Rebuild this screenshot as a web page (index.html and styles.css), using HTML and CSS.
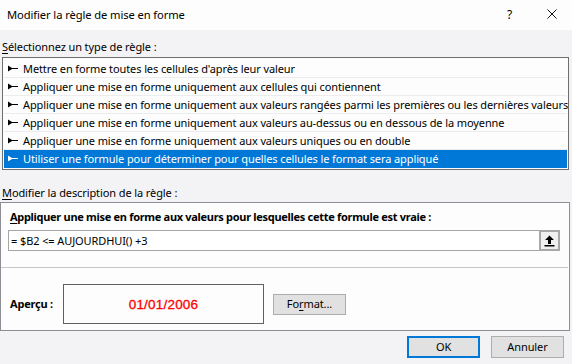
FILE: index.html
```html
<!DOCTYPE html>
<html lang="fr">
<head>
<meta charset="utf-8">
<link rel="stylesheet" href="styles.css">
</head>
<body>
<div class="dialog">
  <div class="titlebar">
    <span class="title">Modifier la règle de mise en forme</span>
    <span class="help">?</span>
    <svg class="close" width="10" height="10" viewBox="0 0 10 10"><path d="M0.5 0.5 L9.5 9.5 M9.5 0.5 L0.5 9.5" stroke="#111" stroke-width="1" fill="none"/></svg>
  </div>
  <div class="section-label"><u>S</u>électionnez un type de règle :</div>
  <ul class="rules">
    <li class="rule"><svg class="mark" width="11" height="7" viewBox="0 0 11 7"><path d="M0 0.5 L4 3 L10 3 L10 4 L4 4 L0 6.5 Z"/></svg>Mettre en forme toutes les cellules d'après leur valeur</li>
    <li class="rule"><svg class="mark" width="11" height="7" viewBox="0 0 11 7"><path d="M0 0.5 L4 3 L10 3 L10 4 L4 4 L0 6.5 Z"/></svg>Appliquer une mise en forme uniquement aux cellules qui contiennent</li>
    <li class="rule"><svg class="mark" width="11" height="7" viewBox="0 0 11 7"><path d="M0 0.5 L4 3 L10 3 L10 4 L4 4 L0 6.5 Z"/></svg>Appliquer une mise en forme uniquement aux valeurs rangées parmi les premières ou les dernières valeurs</li>
    <li class="rule"><svg class="mark" width="11" height="7" viewBox="0 0 11 7"><path d="M0 0.5 L4 3 L10 3 L10 4 L4 4 L0 6.5 Z"/></svg>Appliquer une mise en forme uniquement aux valeurs au-dessus ou en dessous de la moyenne</li>
    <li class="rule"><svg class="mark" width="11" height="7" viewBox="0 0 11 7"><path d="M0 0.5 L4 3 L10 3 L10 4 L4 4 L0 6.5 Z"/></svg>Appliquer une mise en forme uniquement aux valeurs uniques ou en double</li>
    <li class="rule selected"><svg class="mark" width="11" height="7" viewBox="0 0 11 7"><path d="M0 0.5 L4 3 L10 3 L10 4 L4 4 L0 6.5 Z"/></svg>Utiliser une formule pour déterminer pour quelles cellules le format sera appliqué</li>
  </ul>
  <div class="section-label desc-label"><u>M</u>odifier la description de la règle :</div>
  <div class="group">
    <div class="formula-label"><u>A</u>ppliquer une mise en forme aux valeurs pour lesquelles cette formule est vraie :</div>
    <div class="formula">
      <span class="formula-text">= $B2 &lt;= AUJOURDHUI() +3</span>
      <span class="collapse-btn"><svg width="11" height="12" viewBox="0 0 11 12"><path d="M5.5 0.5 L10 5 L7 5 L7 9 L4 9 L4 5 L1 5 Z" fill="#000"/><rect x="0.5" y="10" width="10" height="1.5" fill="#000"/></svg></span>
    </div>
    <div class="separator"></div>
    <div class="preview-row">
      <span class="preview-label">Aperçu :</span>
      <div class="preview-box">01/01/2006</div>
      <button class="btn format-btn">Fo<u>r</u>mat...</button>
    </div>
  </div>
  <div class="actions">
    <button class="btn action-btn default">OK</button>
    <button class="btn action-btn">Annuler</button>
  </div>
</div>
</body>
</html>
```

FILE: styles.css
```css
html, body {
  margin: 0;
  padding: 0;
}
body {
  width: 572px;
  height: 364px;
  background: #f3f2f5;
  font-family: "Noto Sans", "Open Sans", sans-serif;
  font-size: 11px;
  letter-spacing: -0.1px;
  color: #000;
  overflow: hidden;
}
.dialog {
  display: flex;
  flex-direction: column;
  width: 572px;
  height: 364px;
}
.titlebar {
  height: 30px;
  background: #fcfdfc;
  display: flex;
  align-items: center;
  padding-left: 7px;
  box-sizing: border-box;
}
.title {
  flex: 1;
  font-size: 11.2px;
  line-height: 16px;
}
.help {
  width: 10px;
  margin-right: 30px;
  font-size: 12px;
  line-height: 16px;
}
.close {
  margin-right: 15px;
  margin-bottom: 2px;
}
.section-label {
  margin-top: 9px;
  margin-left: 2px;
  line-height: 16px;
}
u {
  text-decoration-thickness: 1px;
  text-underline-offset: 2px;
}
.rules {
  list-style: none;
  margin: 2px 3px 0 2px;
  padding: 2px 1px 1px 1px;
  border: 1px solid #6e6e6e;
  background: #fcfdfc;
}
.rule {
  height: 18px;
  box-sizing: border-box;
  border-bottom: 1px solid #ececec;
  display: flex;
  align-items: center;
  padding-left: 4px;
  padding-bottom: 1px;
  white-space: nowrap;
}
.rule .mark {
  fill: #000;
  margin-right: 4px;
  flex: none;
}
.rule.selected {
  background: #0078d7;
  color: #fff;
  border-bottom-color: #0078d7;
}
.rule.selected .mark {
  fill: #fff;
}
.desc-label {
  margin-top: 15px;
}
.group {
  margin: 1px 2px 0 0;
  border: 1px solid #8e8e96;
  background: #fcfdfc;
  height: 129px;
  box-sizing: border-box;
  display: flex;
  flex-direction: column;
}
.formula-label {
  font-weight: bold;
  letter-spacing: -0.3px;
  margin: 6px 0 0 9px;
  line-height: 16px;
}
.formula {
  margin: 5px 9px 0 7px;
  height: 21px;
  box-sizing: border-box;
  border: 1px solid #a5a5a5;
  background: #fff;
  display: flex;
  align-items: center;
}
.formula-text {
  flex: 1;
  padding-left: 2px;
  line-height: 16px;
}
.collapse-btn {
  width: 21px;
  height: 21px;
  margin: -1px -1px -1px 0;
  box-sizing: border-box;
  border: 2px solid #a8a8a8;
  background: #f0f0f0;
  display: flex;
  align-items: center;
  justify-content: center;
}
.separator {
  margin: 16px 1px 0 0;
  height: 1px;
  background: #c8c8c8;
}
.preview-row {
  display: flex;
  align-items: center;
  margin-top: 16px;
}
.preview-label {
  font-weight: bold;
  letter-spacing: -0.2px;
  margin-left: 9px;
  width: 53px;
  line-height: 16px;
}
.preview-box {
  width: 201px;
  height: 40px;
  box-sizing: border-box;
  border: 1px solid #5f5f5f;
  background: #fcfdfc;
  color: #ff0000;
  font-family: "Liberation Sans", Arial, sans-serif;
  font-size: 13.5px;
  letter-spacing: 0.2px;
  -webkit-text-stroke: 0.3px #ff0000;
  display: flex;
  align-items: center;
  justify-content: center;
}
.btn {
  font-family: inherit;
  font-size: 11px;
  letter-spacing: -0.1px;
  color: #000;
  background: #e1e1e1;
  border: 1px solid #adadad;
  box-sizing: border-box;
  padding: 0;
  margin: 0;
  line-height: 16px;
}
.format-btn {
  width: 73px;
  height: 21px;
  margin-left: 9px;
}
.actions {
  display: flex;
  justify-content: flex-end;
  gap: 11px;
  margin-top: 5px;
  padding-right: 8px;
}
.action-btn {
  width: 73px;
  height: 22px;
}
.action-btn.default {
  border: 2px solid #0078d7;
}
```
